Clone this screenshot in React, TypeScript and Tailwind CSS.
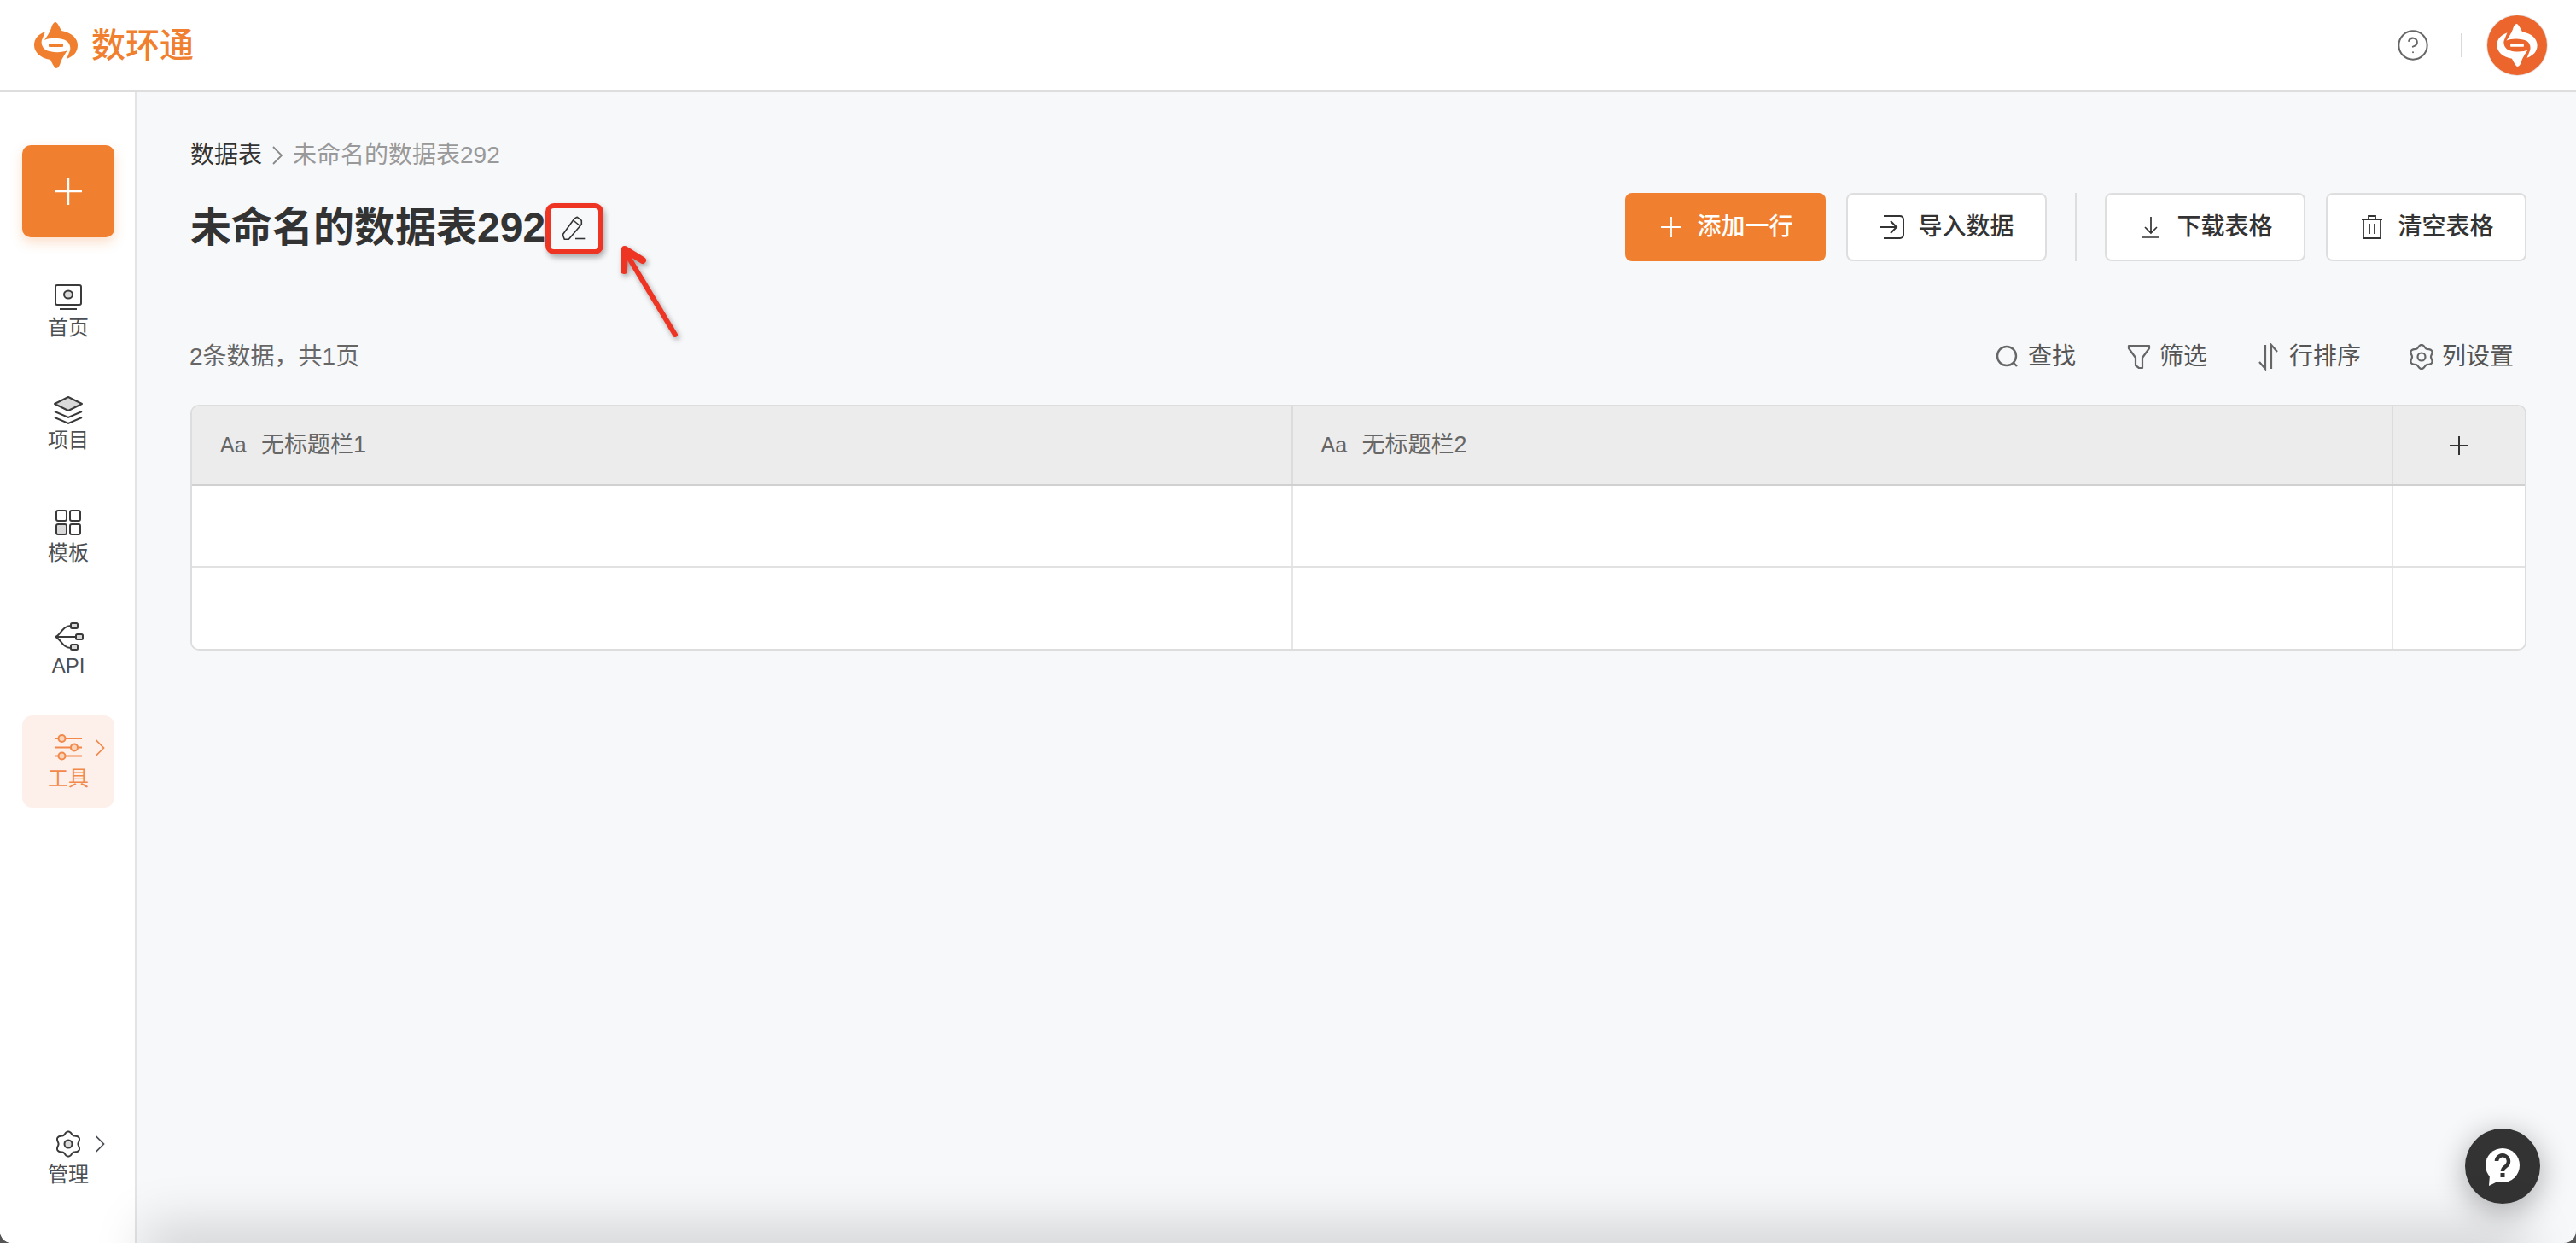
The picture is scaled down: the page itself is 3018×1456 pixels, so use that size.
import { CircleHelp } from "lucide-react";
import type { ReactNode } from "react";

const ORANGE = "#f08030";

// scalloped gear outline used by 管理 and 列设置
function gearPath(cx: number, cy: number, r: number, depth: number) {
    const pts: string[] = [];
    for (let i = 0; i < 120; i++) {
        const t = (i / 120) * Math.PI * 2;
        const rr = r * (1 + depth * Math.cos(6 * t));
        pts.push(`${(cx + rr * Math.sin(t)).toFixed(2)} ${(cy - rr * Math.cos(t)).toFixed(2)}`);
    }
    return "M" + pts.join("L") + "Z";
}

function LogoMark({ color, className }: { color: string; className: string }) {
    const half = "M65 25C67 25 70 31 72 35C84 37 91 44 91 52C91 60 86 65 78 68L82 58C83 55 82 50 78 47C72 43 58 43 52 46C55 42 58 37 60 32C61 28 63 25 65 25Z";
    return (
        <svg viewBox="40 25 51 54" className={className} fill={color}>
            <path d={half} />
            <path d={half} transform="rotate(180 65.5 52)" />
            <rect x="57" y="50" width="17" height="4" rx="1" />
        </svg>
    );
}

function Chevron({ className }: { className: string }) {
    return (
        <svg viewBox="0 0 12 22" className={className} fill="none" stroke="currentColor" strokeWidth="1.8">
            <path d="M1 1l10 10L1 21" />
        </svg>
    );
}

const navIcon = "w-9 h-9";
const stroke = { fill: "none", stroke: "#3a3a3a", strokeWidth: 2 };

const HomeIcon = (
    <svg viewBox="0 0 36 36" className={navIcon} {...stroke}>
        <rect x="3" y="4" width="30" height="23" rx="2" />
        <ellipse cx="18" cy="15" rx="5" ry="4.5" fill="#d9d9d9" />
        <path d="M8 32h20" />
    </svg>
);
const LayersIcon = (
    <svg viewBox="0 0 36 36" className={navIcon} {...stroke}>
        <path d="M18 3l16 8-16 8L2 11z" fill="#d9d9d9" strokeLinejoin="round" />
        <path d="M2 20l16 7 16-7M2 27l16 7 16-7" />
    </svg>
);
const GridIcon = (
    <svg viewBox="0 0 36 36" className={navIcon} {...stroke}>
        <rect x="4" y="4" width="12" height="12" rx="2" />
        <rect x="20" y="4" width="12" height="12" rx="2" />
        <rect x="4" y="20" width="12" height="12" rx="2" fill="#d9d9d9" />
        <rect x="20" y="20" width="12" height="12" rx="2" />
    </svg>
);
const ApiIcon = (
    <svg viewBox="0 0 36 36" className={navIcon} {...stroke}>
        <path d="M2 20h25M3 20c6-2 8-13 18-13M3 20c6 2 8 13 18 13" />
        <rect x="21" y="4" width="8" height="6" rx="1.5" fill="#d9d9d9" />
        <rect x="27" y="17" width="8" height="6" rx="1.5" fill="#d9d9d9" />
        <rect x="21" y="29" width="8" height="6" rx="1.5" fill="#d9d9d9" />
    </svg>
);
const SlidersIcon = (
    <svg viewBox="0 0 36 36" className={navIcon} fill="none" stroke="#f2894a" strokeWidth="2">
        <path d="M2 7h32M2 17.500h32M2 27.500h32" />
        <circle cx="10.500" cy="7" r="4" fill="#fbd3b8" />
        <circle cx="25" cy="17.500" r="4" fill="#fbd3b8" />
        <circle cx="10.500" cy="27.500" r="4" fill="#fbd3b8" />
    </svg>
);
const GearIcon = (
    <svg viewBox="0 0 36 36" className={navIcon} {...stroke}>
        <path d={gearPath(18, 18, 13, 0.12)} />
        <circle cx="18" cy="18" r="4.500" fill="#d9d9d9" />
    </svg>
);

function NavItem({ icon, label, active, arrow }: { icon: ReactNode; label: string; active?: boolean; arrow?: boolean }) {
    return (
        <div className={`relative h-[108px] w-[108px] rounded-[12px] flex flex-col items-center pt-[20px] ${active ? "bg-[#fdf0ea] text-[#f2894a]" : "text-[#4b4f54]"}`}>
            {icon}
            <span className="mt-[2px] text-[24px] leading-[32px]">{label}</span>
            {arrow && <Chevron className="absolute left-[85px] top-[28px] w-[12px] h-[20px]" />}
        </div>
    );
}

function ActionButton({ icon, label, primary }: { icon: ReactNode; label: string; primary?: boolean }) {
    return (
        <button className={`h-[80px] w-[235px] rounded-[8px] flex items-center justify-center gap-[14px] text-[28px] font-medium ${primary ? "bg-[#f08030] text-white" : "bg-white border-2 border-[#dedede] text-[#333]"}`}>
            {icon}
            {label}
        </button>
    );
}

const btnIcon = "w-8 h-8";
const tool = "w-8 h-8";

function ToolItem({ icon, label, className = "" }: { icon: ReactNode; label: string; className?: string }) {
    return (
        <div className={`flex items-center gap-2 text-[28px] leading-[40px] text-[#555] ${className}`}>
            {icon}
            {label}
        </div>
    );
}

function HeadCell({ label }: { label: string }) {
    return (
        <div className="h-full flex items-center pl-[33px] border-r-2 border-[#dcdcdc] text-[27px] text-[#666]">
            <span className="w-[48px] text-[25px]">Aa</span>
            {label}
        </div>
    );
}

function Row() {
    return (
        <div className="grid grid-cols-[1fr_1fr_154px] h-[96px] bg-white border-b-2 border-[#e2e2e2] last:border-b-0 last:h-[95px]">
            <div className="border-r-2 border-[#e6e6e6]" />
            <div className="border-r-2 border-[#e6e6e6]" />
            <div />
        </div>
    );
}

export default function App() {
    return (
        <div className="h-[1456px] w-[3018px] bg-[#555] [font-family:'Liberation_Sans','Noto_Sans_CJK_SC',sans-serif]">
            <div className="relative h-full w-full rounded-b-[14px] overflow-hidden bg-[#f7f8fa] flex flex-col">
                <header className="h-[108px] shrink-0 bg-white border-b-2 border-[#dedede] flex items-center pl-[40px] pr-[34px]">
                    <LogoMark color={ORANGE} className="w-[51px] h-[54px]" />
                    <span className="ml-[16px] text-[40px] leading-none font-medium text-[#f08030]">数环通</span>
                    <div className="ml-auto flex items-center">
                        <CircleHelp size={40} strokeWidth={1.2} className="text-[#666]" />
                        <div className="ml-[36px] h-[28px] w-[2px] bg-[#d9d9d9]" />
                        <div className="ml-[29px] w-[70px] h-[70px] rounded-full bg-[#ec652c] ring-1 ring-[#e5e5e5] flex items-center justify-center">
                            <LogoMark color="#fff" className="w-[48px] h-[50px]" />
                        </div>
                    </div>
                </header>

                <div className="flex-1 flex min-h-0">
                    <aside className="w-[160px] shrink-0 bg-white border-r-2 border-[#e4e4e4] pl-[26px] pt-[62px] pb-[46px] flex flex-col">
                        <button className="h-[108px] w-[108px] rounded-[10px] bg-[#f08030] shadow-[0_6px_14px_rgba(240,128,48,0.25)] flex items-center justify-center">
                            <svg viewBox="0 0 32 32" className="w-8 h-8" stroke="#fff" strokeWidth="2.400">
                                <path d="M16 0v32M0 16h32" />
                            </svg>
                        </button>
                        <nav className="mt-[32px] flex flex-col gap-[24px]">
                            <NavItem icon={HomeIcon} label="首页" />
                            <NavItem icon={LayersIcon} label="项目" />
                            <NavItem icon={GridIcon} label="模板" />
                            <NavItem icon={ApiIcon} label="API" />
                            <NavItem icon={SlidersIcon} label="工具" active arrow />
                        </nav>
                        <div className="mt-auto">
                            <NavItem icon={GearIcon} label="管理" arrow />
                        </div>
                    </aside>

                    <main className="flex-1 min-w-0 pl-[63px] pr-[58px] pt-[54px]">
                        <div className="h-[40px] flex items-center text-[28px] text-[#333]">
                            <span>数据表</span>
                            <Chevron className="mx-[12px] w-[12px] h-[24px] text-[#888]" />
                            <span className="text-[#999]">未命名的数据表292</span>
                        </div>

                        <div className="mt-[24px] h-[80px] flex items-center">
                            <h1 className="mt-[2px] text-[48px] leading-[60px] font-bold text-[#333]">未命名的数据表292</h1>
                            <div className="w-[68px] h-[60px] mt-[4px] rounded-[10px] border-[6px] border-[#ee3524] shadow-[2px_4px_6px_rgba(0,0,0,0.3)] flex items-center justify-center">
                                <svg viewBox="0 0 30 30" className="w-[30px] h-[30px]" fill="none" stroke="#333" strokeWidth="1.600" strokeLinejoin="round">
                                    <path d="M1.700 21.300L15 3l3.300-1.700 5 4v4.400L8.300 27.300h-5l-1.600-4.300z" />
                                    <path d="M13.500 5l8 6.500" />
                                    <path d="M16 26.500h11.300" />
                                </svg>
                            </div>
                            <div className="ml-auto flex items-center gap-[24px]">
                                <ActionButton
                                    primary
                                    label="添加一行"
                                    icon={
                                        <svg viewBox="0 0 32 32" className={btnIcon} stroke="#fff" strokeWidth="1.800">
                                            <path d="M16 4v24M4 16h24" />
                                        </svg>
                                    }
                                />
                                <ActionButton
                                    label="导入数据"
                                    icon={
                                        <svg viewBox="0 0 32 32" className={btnIcon} fill="none" stroke="#333" strokeWidth="2">
                                            <path d="M6 3h19a4 4 0 014 4v18a4 4 0 01-4 4H6" />
                                            <path d="M2 16h19M14 9l7 7-7 7" />
                                        </svg>
                                    }
                                />
                                <div className="mx-[9px] h-[80px] w-[2px] bg-[#dedede]" />
                                <ActionButton
                                    label="下载表格"
                                    icon={
                                        <svg viewBox="0 0 32 32" className={btnIcon} fill="none" stroke="#333" strokeWidth="1.700">
                                            <path d="M16 4v19M9 16l7 7 7-7M6 28h20" />
                                        </svg>
                                    }
                                />
                                <ActionButton
                                    label="清空表格"
                                    icon={
                                        <svg viewBox="0 0 32 32" className={btnIcon} fill="none" stroke="#333" strokeWidth="1.800">
                                            <path d="M4 7h24M12 7V3h8v4M6 7v22h20V7M13 12v12M19 12v12" />
                                        </svg>
                                    }
                                />
                            </div>
                        </div>

                        <div className="mt-[92px] h-[40px] flex items-center justify-between">
                            <span className="text-[28px] text-[#666] -ml-px">2条数据，共1页</span>
                            <div className="flex items-center gap-[55px] pr-[15px]">
                                <ToolItem
                                    label="查找"
                                    className="mr-[3px]"
                                    icon={
                                        <svg viewBox="0 0 32 32" className={tool} fill="none" stroke="#666" strokeWidth="2.400">
                                            <circle cx="15" cy="15" r="11" />
                                            <path d="M23 23l4 4" />
                                        </svg>
                                    }
                                />
                                <ToolItem
                                    label="筛选"
                                    className="mr-[1px]"
                                    icon={
                                        <svg viewBox="0 0 32 32" className={tool} fill="none" stroke="#666" strokeWidth="2.200" strokeLinejoin="round">
                                            <path d="M4 3h24v3l-8 11v12h-4l-4-3V17L4 6z" />
                                        </svg>
                                    }
                                />
                                <ToolItem
                                    label="行排序"
                                    icon={
                                        <svg viewBox="0 0 32 32" className={tool} fill="none" stroke="#666" strokeWidth="2.200">
                                            <path d="M12 2v28L5 22M19 30V2l7 8" />
                                        </svg>
                                    }
                                />
                                <ToolItem
                                    label="列设置"
                                    icon={
                                        <svg viewBox="0 0 32 32" className={tool} fill="none" stroke="#666" strokeWidth="2.200">
                                            <path d={gearPath(16, 16, 12.500, 0.12)} />
                                            <circle cx="16" cy="16" r="4.500" />
                                        </svg>
                                    }
                                />
                            </div>
                        </div>

                        <div className="mt-[36px] rounded-[10px] overflow-hidden border-2 border-[#dddddd]">
                            <div className="grid grid-cols-[1fr_1fr_154px] h-[93px] bg-[#ececec] border-b-2 border-[#d0d0d0]">
                                <HeadCell label="无标题栏1" />
                                <HeadCell label="无标题栏2" />
                                <div className="flex items-center justify-center">
                                    <svg viewBox="0 0 24 24" className="w-6 h-6" stroke="#333" strokeWidth="2">
                                        <path d="M12 1v22M1 12h22" />
                                    </svg>
                                </div>
                            </div>
                            <Row />
                            <Row />
                        </div>
                    </main>
                </div>

                {/* annotation arrow drawn over the page */}
                <svg viewBox="0 0 90 120" className="absolute left-[715px] top-[280px] w-[90px] h-[120px] drop-shadow-[2px_3px_3px_rgba(0,0,0,0.35)]" fill="none" stroke="#ee3524" strokeLinecap="round" strokeLinejoin="round">
                    <path d="M17 14l59 98" strokeWidth="6" />
                    <path d="M16 37l1-25 21 13" strokeWidth="8" />
                </svg>

                {/* floating help */}
                <div className="absolute right-[42px] bottom-[46px] w-[88px] h-[88px] rounded-full bg-[#333] shadow-[0_8px_36px_rgba(0,0,0,0.32)] flex items-center justify-center">
                    <svg viewBox="0 0 44 46" className="w-[44px] h-[46px]">
                        <circle cx="22" cy="22" r="20" fill="#fff" />
                        <path d="M7 33l-1 13 12-6z" fill="#fff" />
                        <path d="M15 17a7 7 0 1 1 11 6c-3 2-4 3-4 6" fill="none" stroke="#333" strokeWidth="4.500" />
                        <rect x="19.500" y="31" width="5" height="5" fill="#333" />
                    </svg>
                </div>

                {/* soft shadow of the window below, comes in at the bottom edge */}
                <div className="absolute left-[190px] right-[80px] top-full h-[20px] pointer-events-none shadow-[0_0_60px_22px_rgba(0,0,0,0.15)]" />
            </div>
        </div>
    );
}
